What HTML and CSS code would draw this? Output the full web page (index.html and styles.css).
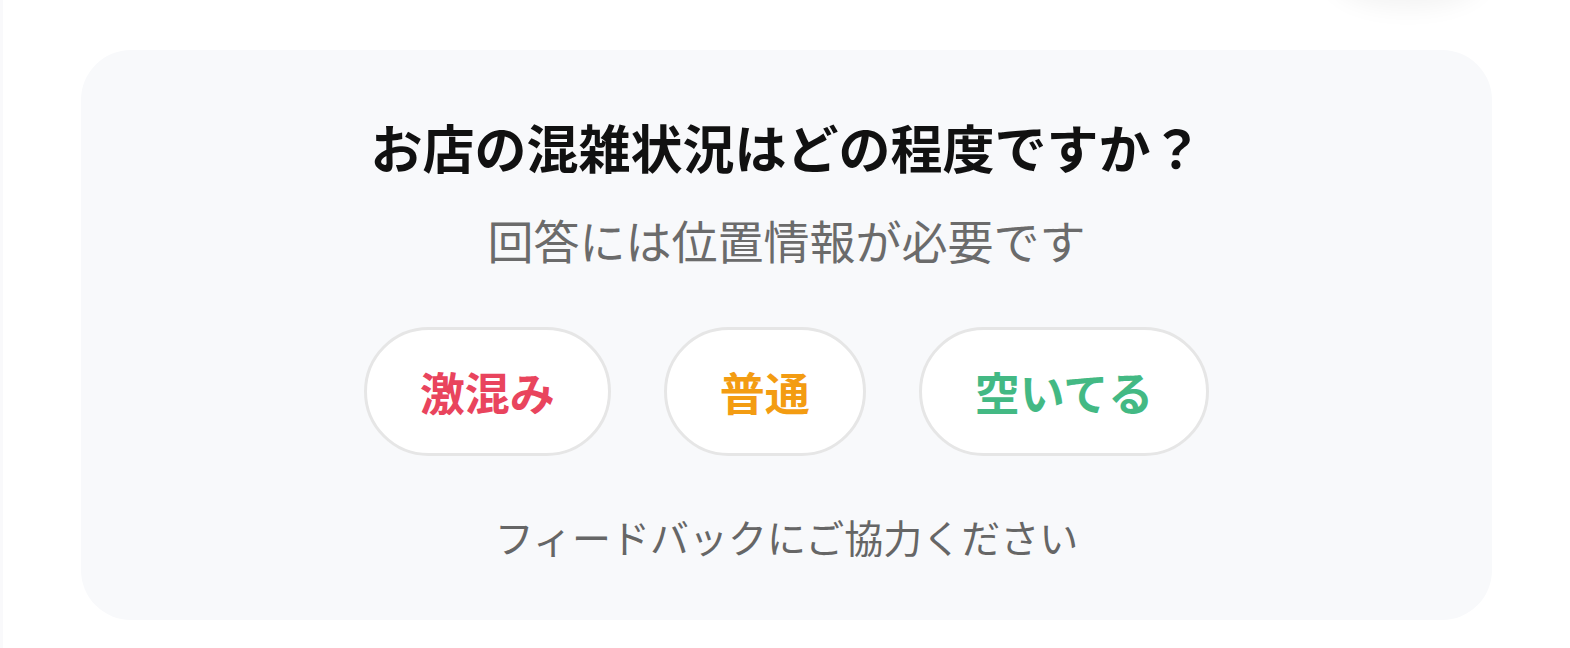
FILE: index.html
```html
<!DOCTYPE html>
<html lang="ja">
<head>
<meta charset="utf-8">
<link rel="stylesheet" href="styles.css">
</head>
<body>
<div class="page">
  <div class="fab-shadow"></div>
  <section class="card">
    <h2 class="title">お店の混雑状況はどの程度ですか？</h2>
    <p class="sub">回答には位置情報が必要です</p>
    <div class="options">
      <button class="opt busy">激混み</button>
      <button class="opt normal">普通</button>
      <button class="opt free">空いてる</button>
    </div>
    <p class="note">フィードバックにご協力ください</p>
  </section>
</div>
</body>
</html>
```

FILE: styles.css
```css
* { box-sizing: border-box; }
html, body { margin: 0; padding: 0; background: #fff; }
body {
  font-family: "Noto Sans CJK JP", "Noto Sans", sans-serif;
  width: 1570px;
  height: 648px;
  overflow: hidden;
}
.page {
  position: relative;
  height: 648px;
  border-left: 3px solid #f9f9fb;
  padding: 50px 78px 0 78px;
}
.fab-shadow {
  position: absolute;
  left: 1330px;
  top: -60px;
  width: 150px;
  height: 60px;
  border-radius: 50%;
  box-shadow: 0 8px 24px rgba(0,0,0,0.05);
}
.card {
  background: #f8f9fb;
  border-radius: 50px;
  height: 570px;
  padding-top: 71px;
  display: flex;
  flex-direction: column;
  align-items: center;
}
.title {
  margin: 0;
  font-size: 52px;
  line-height: 1;
  font-weight: 700;
  color: #111;
}
.sub {
  margin: 43px 0 0;
  font-size: 46px;
  line-height: 1;
  color: #6b6b6b;
}
.options {
  display: flex;
  gap: 53px;
  margin-top: 65px;
}
.opt {
  font-family: inherit;
  font-size: 45px;
  font-weight: 700;
  line-height: 1;
  height: 129px;
  padding: 0 53px;
  border: 3px solid #e6e6e6;
  border-radius: 65px;
  background: #fff;
}
.busy { color: #e9445d; }
.normal { color: #f39c12; }
.free { color: #43b984; }
.note {
  margin: 61px 0 0;
  font-size: 39px;
  line-height: 1;
  color: #666;
}
```
